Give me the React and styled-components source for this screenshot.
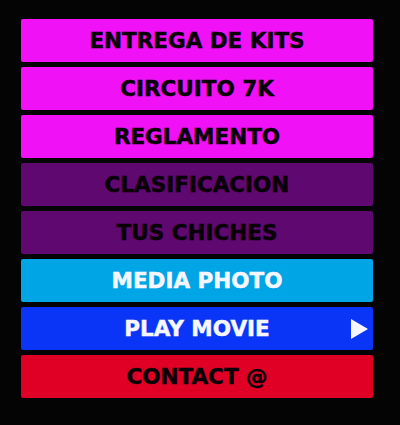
import React from 'react'
import styled, { createGlobalStyle } from 'styled-components'

const GlobalStyle = createGlobalStyle`
  html, body {
    margin: 0;
    padding: 0;
    background-color: #040404;
  }
`

const Menu = styled.nav`
  display: flex;
  flex-direction: column;
  gap: 5px;
  width: 352px;
  padding: 19px 0 28px 21px;
`

const colors = {
  magenta: '#f011f6',
  purple: '#5f0870',
  cyan: '#00a5e6',
  blue: '#0b35f6',
  red: '#e00025'
}

const Item = styled.a`
  position: relative;
  display: flex;
  align-items: center;
  justify-content: center;
  height: 43px;
  border-radius: 2px;
  background-color: ${props => colors[props.tone]};
  color: ${props => (props.light ? '#f6f6ff' : '#0a0008')};
  -webkit-text-stroke: 0.5px ${props => (props.light ? '#f6f6ff' : '#0a0008')};
  font-family: 'DejaVu Sans', sans-serif;
  font-weight: 700;
  font-size: 21.5px;
  line-height: 1;
  text-decoration: none;
  cursor: pointer;
`

const Play = styled.svg`
  position: absolute;
  right: 5px;
  top: 12px;
  width: 17px;
  height: 20px;
`

const items = [
  { label: 'ENTREGA DE KITS', tone: 'magenta' },
  { label: 'CIRCUITO 7K', tone: 'magenta' },
  { label: 'REGLAMENTO', tone: 'magenta' },
  { label: 'CLASIFICACION', tone: 'purple' },
  { label: 'TUS CHICHES', tone: 'purple' },
  { label: 'MEDIA PHOTO', tone: 'cyan', light: true },
  { label: 'PLAY MOVIE', tone: 'blue', light: true, play: true },
  { label: 'CONTACT @', tone: 'red' }
]

export default function App() {
  return (
    <>
      <GlobalStyle />
      <Menu>
        {items.map(item => (
          <Item key={item.label} tone={item.tone} light={item.light}>
            {item.label}
            {item.play && (
              <Play viewBox="0 0 17 20">
                <polygon points="0,0 17,10 0,20" fill="#f6f6ff" />
              </Play>
            )}
          </Item>
        ))}
      </Menu>
    </>
  )
}
